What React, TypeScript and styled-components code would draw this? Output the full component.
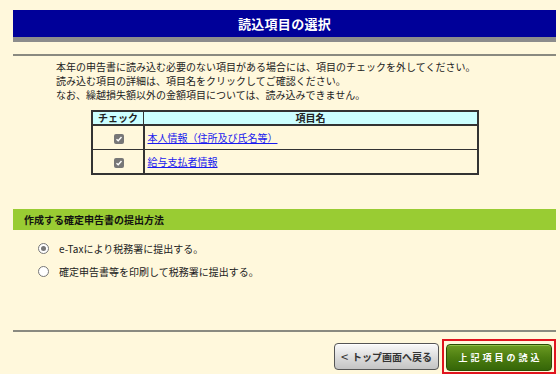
import React from "react";
import styled, { createGlobalStyle } from "styled-components";

const Global = createGlobalStyle`
  html, body { margin: 0; padding: 0; background: #fff8dc; }
  body { font-family: "Noto Sans CJK JP", "Noto Sans", sans-serif; color: #222; }
`;

const Page = styled.div`
  width: 560px;
  height: 374px;
  box-sizing: border-box;
  padding: 10px 4px 0 13px;
  display: flex;
  flex-direction: column;
  background: #fff8dc;
`;

const TitleBar = styled.div`
  height: 28px;
  background: #000099;
  color: #fff;
  font-weight: bold;
  font-size: 13px;
  display: flex;
  align-items: center;
  justify-content: center;
  border-bottom: 5px solid #8c8c8c;
  letter-spacing: 0.3px;
`;

const Rule = styled.hr<{ $top: number }>`
  margin: ${(p) => p.$top}px 0 0 0;
  border: none;
  height: 2px;
  background: #8a8a80;
`;

const Intro = styled.div`
  margin: 4px 0 0 43px;
  font-size: 10px;
  line-height: 14px;
  color: #222;
`;

const Table = styled.table`
  margin: 8px 0 0 78px;
  width: 388px;
  border-collapse: collapse;
  border: 2px solid #333;
  font-size: 10px;
`;

const HeadCell = styled.th<{ $w?: number }>`
  background: #ccffff;
  border: 1px solid #333;
  border-bottom-width: 2px;
  height: 12px;
  padding: 0;
  font-weight: bold;
  line-height: 12px;
  text-align: center;
  width: ${(p) => (p.$w ? `${p.$w}px` : "auto")};
`;

const Cell = styled.td<{ $center?: boolean }>`
  border: 1px solid #333;
  border-left-width: 2px;
  height: 23px;
  padding: 0 0 0 3px;
  text-align: ${(p) => (p.$center ? "center" : "left")};
  vertical-align: middle;
`;

const Link = styled.a`
  color: #1a1aee;
  text-decoration: underline;
  font-size: 10px;
`;

const Check = styled.span`
  display: inline-flex;
  width: 10px;
  height: 10px;
  border-radius: 2px;
  background: #777;
  align-items: center;
  justify-content: center;
  vertical-align: middle;
`;

const SectionBar = styled.div`
  margin-top: 34px;
  height: 22px;
  background: #99cc33;
  display: flex;
  align-items: center;
  padding-left: 11px;
  font-size: 10px;
  font-weight: bold;
  color: #111;
`;

const Options = styled.div`
  margin: 11px 0 0 25px;
  display: flex;
  flex-direction: column;
  gap: 8px;
`;

const Option = styled.label`
  display: flex;
  align-items: center;
  gap: 10px;
  font-size: 10px;
  height: 15px;
  color: #222;
`;

const Radio = styled.span<{ $on?: boolean }>`
  width: 9px;
  height: 9px;
  border-radius: 50%;
  border: 1px solid #777;
  background: #fff;
  display: inline-flex;
  align-items: center;
  justify-content: center;
  &::after {
    content: "";
    width: 5px;
    height: 5px;
    border-radius: 50%;
    background: ${(p) => (p.$on ? "#777" : "transparent")};
  }
`;

const Footer = styled.div`
  margin-top: 7px;
  display: flex;
  justify-content: flex-end;
  align-items: center;
  gap: 3px;
`;

const BackButton = styled.button`
  width: 105px;
  height: 27px;
  border: 1px solid #555;
  border-radius: 4px;
  background: linear-gradient(#fafafa, #d8d8d8 60%, #c4c4c4);
  font-family: inherit;
  font-size: 10px;
  font-weight: bold;
  color: #333;
  display: flex;
  align-items: center;
  justify-content: center;
  gap: 4px;
  padding: 0;
  box-shadow: inset 0 1px 0 #fff;
`;

const Arrow = styled.span`
  font-size: 13px;
  font-weight: normal;
  line-height: 1;
`;

const Highlight = styled.div`
  border: 2px solid #e0141e;
  padding: 3px 2px 1px 2px;
  display: flex;
`;

const GoButton = styled.button`
  width: 106px;
  height: 27px;
  border: 1px solid #2b4d05;
  border-radius: 4px;
  background: linear-gradient(#6c9a22, #4c7d10 50%, #356608);
  color: #fff;
  font-family: inherit;
  font-size: 9px;
  font-weight: bold;
  letter-spacing: 3px;
  padding: 0 0 0 3px;
  box-shadow: inset 0 1px 0 #8fbf48;
`;

export default function App() {
  return (
    <>
      <Global />
      <Page>
        <TitleBar>読込項目の選択</TitleBar>
        <Rule $top={12} />
        <Intro>
          本年の申告書に読み込む必要のない項目がある場合には、項目のチェックを外してください。
          <br />
          読み込む項目の詳細は、項目名をクリックしてご確認ください。
          <br />
          なお、繰越損失額以外の金額項目については、読み込みできません。
        </Intro>
        <Table>
          <thead>
            <tr>
              <HeadCell $w={50}>チェック</HeadCell>
              <HeadCell>項目名</HeadCell>
            </tr>
          </thead>
          <tbody>
            {["本人情報（住所及び氏名等）", "給与支払者情報"].map((t) => (
              <tr key={t}>
                <Cell $center>
                  <Check>
                    <svg width="8" height="8" viewBox="0 0 8 8">
                      <path d="M1.5 4.2 L3.2 5.8 L6.5 2" stroke="#fff" strokeWidth="1.4" fill="none" />
                    </svg>
                  </Check>
                </Cell>
                <Cell>
                  <Link href="#">{t}</Link>
                </Cell>
              </tr>
            ))}
          </tbody>
        </Table>
        <SectionBar>作成する確定申告書の提出方法</SectionBar>
        <Options>
          <Option>
            <Radio $on />
            e-Taxにより税務署に提出する。
          </Option>
          <Option>
            <Radio />
            確定申告書等を印刷して税務署に提出する。
          </Option>
        </Options>
        <Rule $top={51} />
        <Footer>
          <BackButton>
            <Arrow>&lt;</Arrow>トップ画面へ戻る
          </BackButton>
          <Highlight>
            <GoButton>上記項目の読込</GoButton>
          </Highlight>
        </Footer>
      </Page>
    </>
  );
}
